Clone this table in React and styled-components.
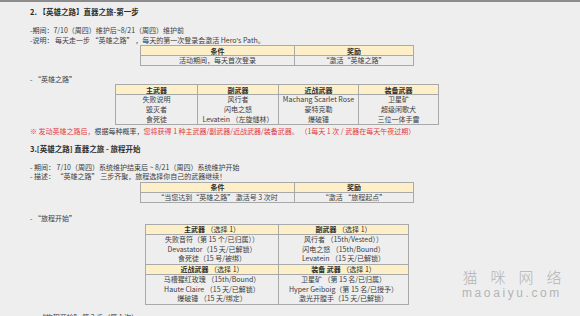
import React from "react";
import styled, { createGlobalStyle } from "styled-components";

const GlobalStyle = createGlobalStyle`
  html, body {
    margin: 0;
    padding: 0;
    background: #eeeeee;
  }
  body {
    font-family: "Noto Sans CJK SC", "Noto Sans", sans-serif;
    color: #3a3a3a;
  }
`;

const Page = styled.div`
  position: relative;
  width: 580px;
  height: 316px;
  overflow: hidden;
  box-sizing: border-box;
  border-top: 2px solid #8c8c8c;
  padding-left: 30px;
`;

const Heading = styled.div`
  margin-top: ${(p) => p.$top}px;
  font-size: 7.5px;
  line-height: 10px;
  font-weight: 700;
  color: #2e2e2e;
  white-space: nowrap;
`;

const Line = styled.div`
  margin-top: ${(p) => p.$top || 0}px;
  font-size: 7px;
  line-height: 9.5px;
  white-space: nowrap;
  color: #3c3c3c;
`;

const Red = styled.span`
  color: #e23b3b;
`;

const Table = styled.table`
  margin-top: ${(p) => p.$top || 0}px;
  margin-left: ${(p) => p.$left}px;
  width: ${(p) => p.$width}px;
  table-layout: fixed;
  border-collapse: collapse;
  border: 1px solid #a9a9a9;
  font-size: 7px;
  white-space: nowrap;
`;

const Row = styled.tr`
  height: 10px;
`;

const Th = styled.td`
  padding: 0;
  line-height: 8px;
  text-align: center;
  background: #fdf0c8;
  border: 1px solid #a9a9a9;
  font-weight: 700;
  color: #2e2e2e;
`;

const Light = styled.span`
  font-weight: 400;
`;

const Td = styled.td`
  padding: 0;
  line-height: 9px;
  text-align: center;
  color: #3c3c3c;
  border-left: 1px solid #a9a9a9;
  border-right: 1px solid #a9a9a9;
  border-bottom: ${(p) => (p.$boxed ? "1px solid #a9a9a9" : "none")};
  overflow: hidden;
`;

const Watermark = styled.div`
  position: absolute;
  left: 462px;
  top: 267px;
  display: flex;
  flex-direction: column;
  align-items: center;
  gap: 2px;
  color: #b4b4b4;
  pointer-events: none;
`;

const MarkTitle = styled.div`
  font-size: 15px;
  line-height: 16px;
  letter-spacing: 13px;
  margin-right: -13px;
  font-weight: 300;
`;

const MarkSite = styled.div`
  font-family: "Liberation Sans", sans-serif;
  font-size: 12px;
  line-height: 12px;
  letter-spacing: 2.6px;
`;

const weapons = [
  ["失败说明", "风行者", "Machang Scarlet Rose", "卫星矿"],
  ["毁灭者", "闪电之怒", "豪特克勒", "超级闲歌犬"],
  ["食死徒", "Levatein （左旋燧林）", "爆破锤", "三位一体手雷"],
];

const choiceTop = [
  ["失败音符（第 15 个/已归属））", "风行者 （15th/Vested））"],
  ["Devastator（15 天/已解锁）", "闪电之怒 （15th/Bound）"],
  ["食死徒（15 号/被绑）", "Levatein （15 天/已解锁）"],
];

const choiceBottom = [
  ["马槽猩红玫瑰 （15th/Bound）", "卫星矿 （第 15 名/已归属）"],
  ["Haute Claire （15 天/已解锁）", "Hyper Geiboig（第 15 名/已授予）"],
  ["爆破锤 （15 天/绑定）", "激光开膛手（15 天/已解锁）"],
];

const ConditionTable = ({ condition, reward }) => (
  <Table $left={110} $width={273}>
    <colgroup>
      <col style={{ width: 154 }} />
      <col style={{ width: 119 }} />
    </colgroup>
    <tbody>
      <Row>
        <Th>条件</Th>
        <Th>奖励</Th>
      </Row>
      <Row>
        <Td $boxed>{condition}</Td>
        <Td $boxed>{reward}</Td>
      </Row>
    </tbody>
  </Table>
);

const App = () => (
  <>
    <GlobalStyle />
    <Page>
      <Heading $top={5}>2. 【英雄之路】直器之旅-第一步</Heading>
      <Line $top={9}>-期间：7/10（周四）维护后~8/21（周四）维护前</Line>
      <Line>-说明： 每天走一步 “英雄之路” ，每天的第一次登录会激活 Hero's Path。</Line>
      <ConditionTable condition="活动期间，每天首次登录" reward="“激活“英雄之路”" />

      <Line $top={8.5}>- “英雄之路”</Line>
      <Table $left={85} $width={323}>
        <colgroup>
          <col style={{ width: 82 }} />
          <col style={{ width: 81 }} />
          <col style={{ width: 80 }} />
          <col style={{ width: 80 }} />
        </colgroup>
        <tbody>
          <Row>
            <Th>主武器</Th>
            <Th>副武器</Th>
            <Th>近战武器</Th>
            <Th>装备武器</Th>
          </Row>
          {weapons.map((row, i) => (
            <Row key={i}>
              {row.map((cell) => (
                <Td key={cell}>{cell}</Td>
              ))}
            </Row>
          ))}
        </tbody>
      </Table>

      <Line $top={2}>
        <Red>※ 发动英雄之路后，</Red>根据每种概率，
        <Red>您将获得 1 种主武器/副武器/近战武器/装备武器。 （1每天 1 次 / 武器在每天午夜过期）</Red>
      </Line>

      <Heading $top={7}>3.[英雄之路] 直器之旅 - 旅程开始</Heading>
      <Line $top={9}>- 期间： 7/10（周四）系统维护结束后 ~ 8/21（周四）系统维护开始</Line>
      <Line>- 描述： “英雄之路” 三步齐聚，旅程选择你自己的武器继续！</Line>
      <ConditionTable
        condition="“当您达到“英雄之路” 激活号 3 次时"
        reward="“激活 “旅程起点”"
      />

      <Line $top={11.5}>- “旅程开始”</Line>
      <Table $left={115} $width={263}>
        <colgroup>
          <col style={{ width: 133 }} />
          <col style={{ width: 130 }} />
        </colgroup>
        <tbody>
          <Row>
            <Th>
              主武器 <Light>（选择 1）</Light>
            </Th>
            <Th>
              副武器 <Light>（选择 1）</Light>
            </Th>
          </Row>
          {choiceTop.map((row, i) => (
            <Row key={i}>
              <Td>{row[0]}</Td>
              <Td>{row[1]}</Td>
            </Row>
          ))}
          <Row>
            <Th>
              近战武器 <Light>（选择 1）</Light>
            </Th>
            <Th>
              装备 武器 <Light>（选择 1）</Light>
            </Th>
          </Row>
          {choiceBottom.map((row, i) => (
            <Row key={i}>
              <Td>{row[0]}</Td>
              <Td>{row[1]}</Td>
            </Row>
          ))}
        </tbody>
      </Table>

      <Line $top={8}>&nbsp;&nbsp;&nbsp;- “旅程开始” 第 2 步（第 1 次）</Line>

      <Watermark>
        <MarkTitle>猫咪网络</MarkTitle>
        <MarkSite>maoaiyu.com</MarkSite>
      </Watermark>
    </Page>
  </>
);

export default App;
